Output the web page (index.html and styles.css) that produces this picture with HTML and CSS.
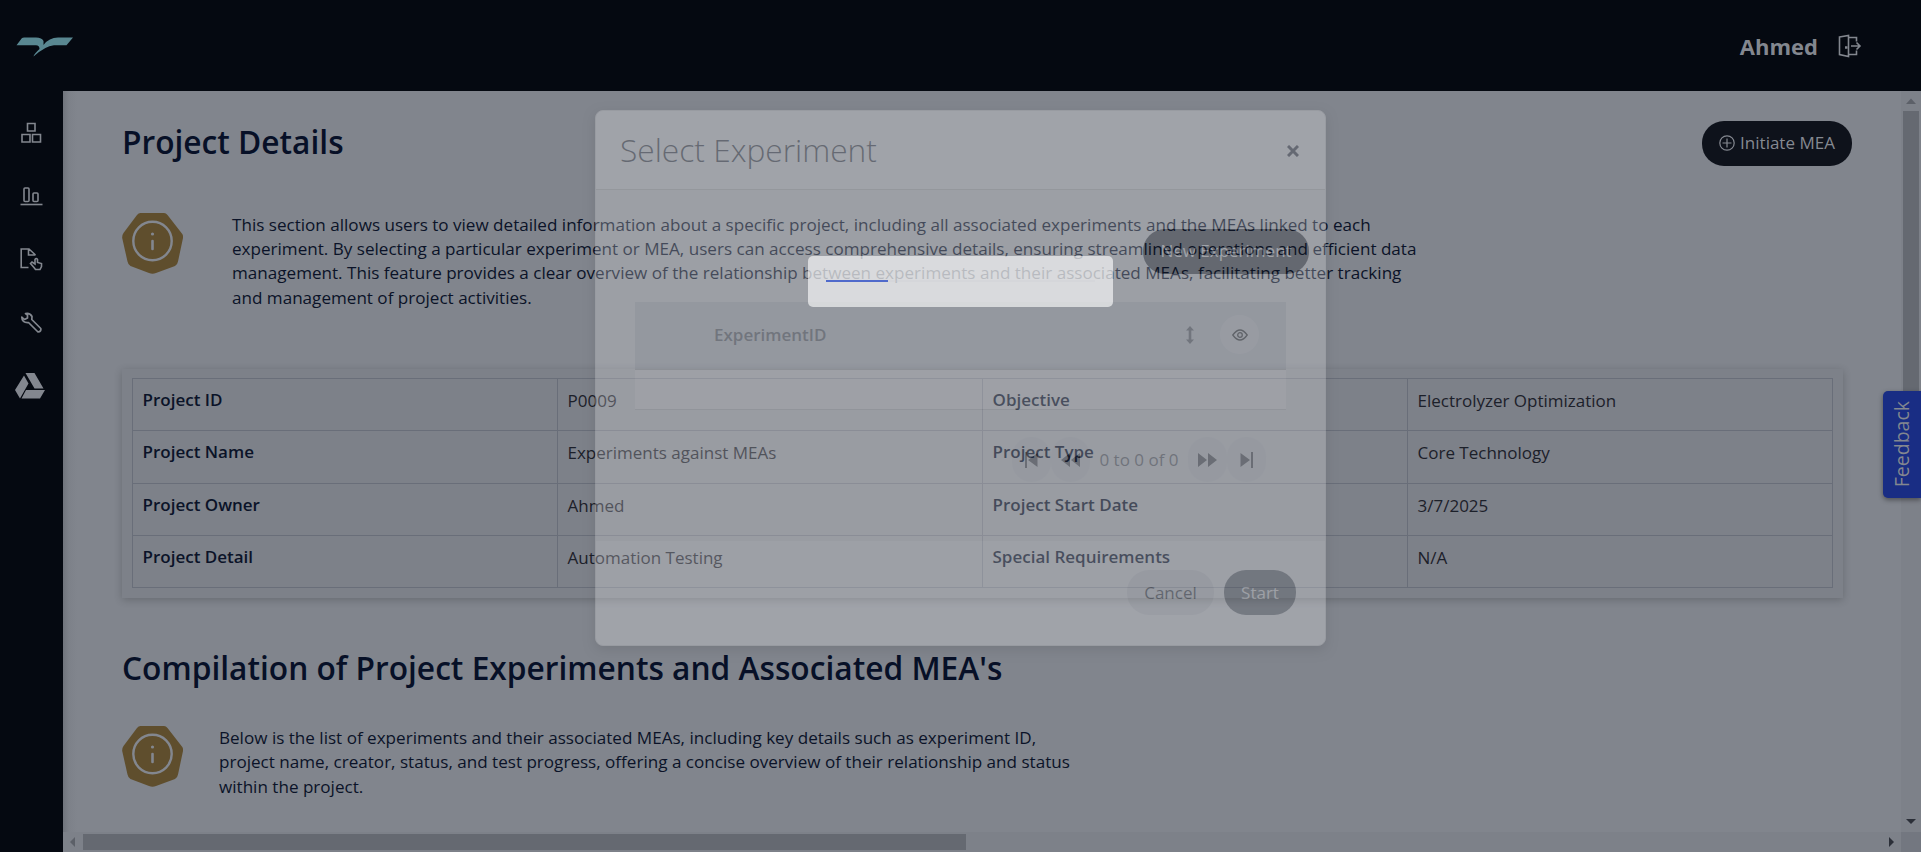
FILE: index.html
```html
<!DOCTYPE html>
<html lang="en">
<head>
<meta charset="utf-8">
<title>Project Details</title>
<link rel="stylesheet" href="styles.css">
</head>
<body>
<div class="app">
  <header class="topbar">
    <svg class="logo" viewBox="0 0 57 20" width="57" height="20"><path fill="#598791" d="M.500 8.200 6 1Q7 .5 8 .5H20Q26 .5 27.500 4V8Q33 .5 42 .5H57L50.500 8.200H38Q29 9 17.500 19.500 18 17 23.500 12 23.500 8.200 20 8.200Z"/></svg>
    <div class="user"><span class="user-name">Ahmed</span>
      <svg width="24" height="24" viewBox="0 0 24 24" fill="none" stroke="#83878f" stroke-width="1.600"><path d="M1.500 3 10.500 1.500V22.500L1.500 20.500ZM10.500 3.500h8v4M10.500 20.500h8v-4M13 12h9M18.500 8.500l3.500 3.500-3.500 3.500"/><path d="M7 13.500h2.500" stroke-width="2.500"/></svg>
    </div>
  </header>
  <div class="main">
    <nav class="sidebar">
      <svg width="32" height="32" viewBox="0 0 32 32" fill="none" stroke="#83878f" stroke-width="1.600"><path d="M12.500 6.500h7.500v7.500h-7.500ZM7 17.500h8v7.500H7ZM17.500 17.500h8v7.500h-8Z"/></svg>
      <svg width="32" height="32" viewBox="0 0 32 32" fill="none" stroke="#83878f" stroke-width="1.600"><path d="M5.500 23.500h22"/><rect x="9" y="7" width="5" height="13.500" rx="1"/><rect x="18" y="12" width="5" height="8.500" rx="1"/></svg>
      <svg width="32" height="32" viewBox="0 0 32 32" fill="none" stroke="#83878f" stroke-width="1.600"><path d="M13.500 23.500H6.200V5H14l6.500 6M13.500 5v6h7M19 23.500l-3.500-4 1.500-1.500 3 2V15.500q1.200-2 2.500 0v3l4 1v3L25 25.500H20.500Z"/></svg>
      <svg width="32" height="32" viewBox="0 0 32 32" fill="none" stroke="#83878f" stroke-width="1.700"><path d="M6.800 9 9.500 11.500 12.500 10V7.200L10.500 5.500Q15 4.500 17 8.500L16.800 11.500 25.800 20.500Q26.500 23.500 23 24L13.500 14.500Q6.800 15 6.800 9Z" stroke-linejoin="round"/></svg>
      <svg width="32" height="32" viewBox="0 0 32 32" fill="#83878f"><path d="M10.500 2h9L28.500 17.500H19.500ZM9 4.500 13.500 12.500 5 27.500 0 19ZM11 19H30L25 27.500H6.500Z"/></svg>
    </nav>
    <main class="content">
      <div class="page">
        <div class="title-row"><h1>Project Details</h1>
          <div class="initiate"><svg width="16" height="16" viewBox="0 0 16 16" fill="none" stroke="#858991" stroke-width="1.200"><circle cx="8" cy="8" r="7.200"/><path d="M8 3.500v9M3.500 8h9"/></svg><span>Initiate MEA</span></div>
        </div>
        <div class="info info-a">
          <svg class="badge" width="61" height="61" viewBox="0 0 61 61"><path d="M18.500 0H42Q44 0 45.500 2L59.500 20Q61.500 22 61 25L56 48.500Q55.500 51.500 53 53L34 60Q30.500 61.500 27 60L8.500 53Q6 51.500 5.500 48.500L.200 25Q0 22 1.500 20L15 2Q16.500 0 18.500 0Z" fill="#5f4e2d"/><circle cx="30.500" cy="28" r="19.200" fill="none" stroke="#83878f" stroke-width="2.400"/><path d="M30.500 28v8" stroke="#83878f" stroke-width="2.600" stroke-linecap="round"/><circle cx="30.500" cy="21" r="1.600" fill="#83878f"/></svg>
          <p>This section allows users to view detailed information about a specific project, including all associated experiments and the MEAs linked to each<br>experiment. By selecting a particular experiment or MEA, users can access comprehensive details, ensuring streamlined operations and efficient data<br>management. This feature provides a clear overview of the relationship between experiments and their associated MEAs, facilitating better tracking<br>and management of project activities.</p>
        </div>
        <div class="card"><div class="grid">
          <b>Project ID</b><span>P0009</span><b>Objective</b><span>Electrolyzer Optimization</span>
          <b>Project Name</b><span>Experiments against MEAs</span><b>Project Type</b><span>Core Technology</span>
          <b>Project Owner</b><span>Ahmed</span><b>Project Start Date</b><span>3/7/2025</span>
          <b>Project Detail</b><span>Automation Testing</span><b>Special Requirements</b><span>N/A</span>
        </div></div>
        <h2>Compilation of Project Experiments and Associated MEA's</h2>
        <div class="info info-b">
          <svg class="badge" width="61" height="61" viewBox="0 0 61 61"><path d="M18.500 0H42Q44 0 45.500 2L59.500 20Q61.500 22 61 25L56 48.500Q55.500 51.500 53 53L34 60Q30.500 61.500 27 60L8.500 53Q6 51.500 5.500 48.500L.200 25Q0 22 1.500 20L15 2Q16.500 0 18.500 0Z" fill="#5f4e2d"/><circle cx="30.500" cy="28" r="19.200" fill="none" stroke="#83878f" stroke-width="2.400"/><path d="M30.500 28v8" stroke="#83878f" stroke-width="2.600" stroke-linecap="round"/><circle cx="30.500" cy="21" r="1.600" fill="#83878f"/></svg>
          <p>Below is the list of experiments and their associated MEAs, including key details such as experiment ID,<br>project name, creator, status, and test progress, offering a concise overview of their relationship and status<br>within the project.</p>
        </div>
      </div>
      <div class="vbar"><svg width="20" height="20" viewBox="0 0 20 20"><path d="M5 13 10 7.500 15 13Z" fill="#5c6068"/></svg><i class="vthumb"></i><svg class="down" width="20" height="20" viewBox="0 0 20 20"><path d="M5 7 10 12 15 7Z" fill="#2b2f38"/></svg></div>
      <div class="hbar"><svg width="20" height="20" viewBox="0 0 20 20"><path d="M12 5 7 10 12 15Z" fill="#5c6068"/></svg><i class="hthumb"></i><svg class="right" width="20" height="20" viewBox="0 0 20 20"><path d="M8 5 13 10 8 15Z" fill="#2b2f38"/></svg></div>
      <div class="corner"></div>
    </main>
  </div>
</div>
<div class="feedback"><span>Feedback</span></div>
<div class="modal">
  <div class="modal-head"><span>Select Experiment</span><svg width="12" height="12" viewBox="0 0 12 12" stroke="#161a28" stroke-width="3"><path d="M1 1 11 11M11 1 1 11"/></svg></div>
  <div class="modal-body">
    <div class="new-exp"><span>New Experiment</span></div>
    <div class="table-head"><span>ExperimentID</span>
      <svg class="sort" width="8" height="18" viewBox="0 0 8 18"><path fill="#444850" d="M4 0 8 4.500H5.300V13.500H8L4 18 0 13.500H2.700V4.500H0Z"/></svg>
      <div class="eye"><svg width="16" height="12" viewBox="0 0 16 12" fill="none" stroke="#000" stroke-width="1.300"><path d="M.800 6Q8-4 15.200 6 8 16 .800 6Z"/><circle cx="8" cy="6" r="2.300"/></svg></div></div>
    <div class="table-empty"></div>
    <div class="pager">
      <i><svg width="13" height="16" viewBox="0 0 13 16"><path d="M0 0h2v16H0ZM12.500 1v14L3 8Z" fill="#33363c"/></svg></i>
      <i><svg width="19" height="16" viewBox="0 0 19 16"><path d="M9 1v14L0 8ZM19 1v14L10 8Z" fill="#33363c"/></svg></i>
      <span>0 to 0 of 0</span>
      <i><svg width="19" height="16" viewBox="0 0 19 16"><path d="M0 1v14L9 8ZM10 1v14L19 8Z" fill="#33363c"/></svg></i>
      <i><svg width="13" height="16" viewBox="0 0 13 16"><path d="M13 0h-2v16h2ZM.500 1v14L10 8Z" fill="#33363c"/></svg></i>
    </div>
  </div>
  <div class="modal-foot"><div class="cancel"><span>Cancel</span></div><div class="start"><span>Start</span></div></div>
</div>
<div class="loader"><div class="track"><i></i></div></div>
</body>
</html>
```

FILE: styles.css
```css
* { box-sizing: border-box; }
body { margin: 0; background: #050911; font-family: "Open Sans", sans-serif; font-size: 17px; line-height: 24px; color: #0b1328; overflow: hidden; }
h1, h2, p { margin: 0; white-space: nowrap; }
svg { display: block; flex: none; }
.app { width: 1921px; height: 852px; display: flex; flex-direction: column; }
.topbar { height: 91px; flex: none; display: flex; justify-content: space-between; align-items: center; padding: 3px 59px 0 16px; background: #050911; }
.user { display: flex; align-items: center; gap: 20px; color: #83878f; height: 24px; margin-bottom: 3px; }
.user-name { font-weight: 700; font-size: 22px; }
.main { flex: 1; display: flex; min-height: 0; }
.sidebar { width: 62px; flex: none; display: flex; flex-direction: column; align-items: center; gap: 31.500px; padding-top: 26px; margin-right: 1px; }
.content { flex: 1; display: grid; grid-template: 741px 20px / 1838px 20px; background: #81858d; }
.page { padding: 30px 49px 0 59px; overflow: hidden; background: linear-gradient(90deg, #70747c, #7d8189 6px, #81858d 14px); }
.title-row { display: flex; justify-content: space-between; height: 92px; align-items: flex-start; }
h1, h2 { font-weight: 600; font-size: 31.700px; line-height: 42px; color: #071027; }
.initiate { display: flex; align-items: center; justify-content: center; gap: 5px; width: 150px; height: 45px; border-radius: 22px; background: #0e121b; color: #858991; padding-bottom: 2px; }
.info { display: flex; }
.info-a { gap: 49px; height: 156px; }
.info-b { gap: 36px; margin-top: 37px; }
.info p { font-size: 17.090px; line-height: 24.400px; }
.info-a p { margin-top: -.5px; }
.card { width: 1721px; height: 229px; padding: 9px 10px 10px; background: #7d8189; box-shadow: 0 2px 8px rgba(0,0,0,.2); margin-bottom: 49px; }
.grid { display: grid; grid-template-columns: repeat(4, 1fr); grid-template-rows: repeat(4, 1fr); height: 210px; border: solid #696e79; border-width: 1px 0 0 1px; }
.grid > * { border: solid #696e79; border-width: 0 1px 1px 0; padding: 9px 10px 9px 9.500px; line-height: 24px; }
.grid b { font-weight: 600; }
.grid span { color: #1c202a; padding-top: 10px; }
.vbar { background: #7d8189; display: flex; flex-direction: column; align-items: center; }
.vthumb { width: 16px; height: 290px; background: #656971; }
.down { margin-top: auto; }
.hbar { background: #7d8189; display: flex; align-items: center; }
.hthumb { height: 16px; width: 883px; background: #656971; }
.right { margin-left: auto; }
.corner { background: #737780; }
.feedback { position: absolute; left: 1883px; top: 391px; width: 38px; height: 107px; border-radius: 5px 0 0 5px; background: #192d84; color: #83878f; display: flex; align-items: center; justify-content: center; box-shadow: 0 2px 5px rgba(0,0,0,.4); font-size: 19.500px; }
.feedback span { writing-mode: vertical-rl; transform: rotate(180deg); }
.modal { position: absolute; left: 595px; top: 110px; width: 731px; height: 536px; border-radius: 8px; border: 1px solid #ddd; background: #fdfdff; opacity: .25; box-shadow: 0 4px 12px rgba(0,0,0,.35); overflow: hidden; color: #161a28; }
.modal-head { height: 79px; display: flex; align-items: center; justify-content: space-between; padding: 0 26px 0 24px; border-bottom: 1px solid #ccc; font-size: 31.700px; font-weight: 300; }
.modal-head svg { margin-top: 2px; }
.modal-body { height: 351px; background: #ececee; padding: 39px 16px 0 39px; }
.new-exp { width: 166px; height: 45px; margin-left: auto; border-radius: 22px; background: #10141c; color: #fff; display: flex; align-items: center; justify-content: center; padding-bottom: 1px; }
.table-head { width: 651px; height: 68px; margin-top: 28px; background: #cdd0d6; display: flex; align-items: center; padding: 0 27px 2px 79px; font-weight: 600; color: #444850; border-bottom: 1px solid #bbb; }
.sort { margin-left: auto; margin-right: 26px; }
.eye { width: 39px; height: 39px; border-radius: 50%; background: #dedfe3; display: flex; align-items: center; justify-content: center; }
.table-empty { width: 651px; height: 40px; background: #fff; border-bottom: 1px solid #ccc; }
.pager { display: flex; align-items: center; margin: 27px 0 0 377px; height: 45px; color: #4a4d55; }
.pager i { width: 39px; height: 45px; border-radius: 20px; background: #e2e3e6; display: flex; align-items: center; justify-content: center; }
.pager span { width: 98px; text-align: center; white-space: nowrap; }
.modal-foot { height: 105px; display: flex; justify-content: flex-end; gap: 10px; padding: 29px 29px 0 0; }
.cancel, .start { width: 87px; height: 45px; border-radius: 22px; background: #e5e6e9; display: flex; align-items: center; justify-content: center; }
.start { width: 72px; background: #555a62; color: #fff; }
.loader { position: absolute; left: 808px; top: 256px; width: 305px; height: 51px; border-radius: 5px; background: rgba(255,255,255,.62); padding: 24px 18px; }
.track { height: 2px; background: rgba(200,202,208,.2); }
.track i { display: block; width: 62px; height: 2px; background: #506acb; }
```
